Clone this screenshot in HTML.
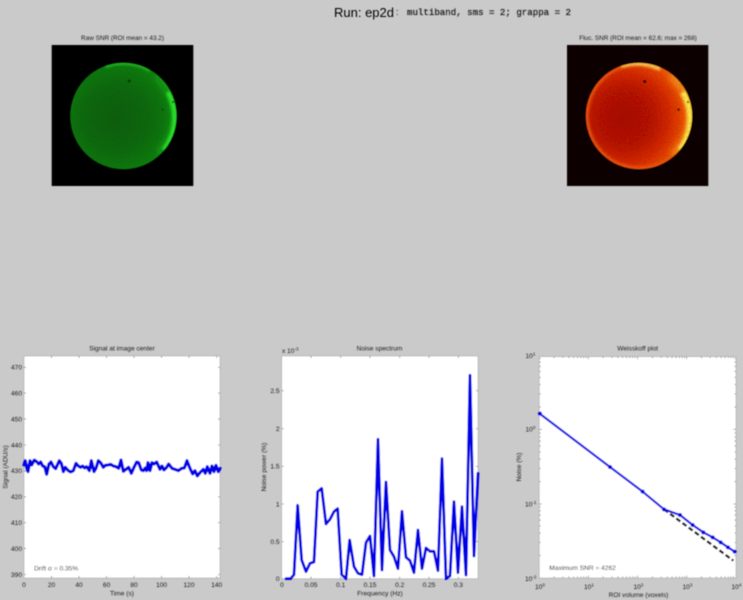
<!DOCTYPE html>
<html><head><meta charset="utf-8"><title>Run: ep2d</title>
<style>
html,body{margin:0;padding:0;background:#cacaca;width:743px;height:600px;overflow:hidden}
svg{display:block}
text{font-family:"Liberation Sans",sans-serif;font-size:6.6px;fill:#1c1c1c}
.m{text-anchor:middle}.e{text-anchor:end}
.mono{font-family:"Liberation Mono",monospace;font-size:9.1px;font-weight:normal;fill:#222;stroke:#222;stroke-width:.25}
.sup{font-size:4.6px}
.tick{stroke:#555;stroke-width:.6;fill:none}
.box{fill:#fff;stroke:#999;stroke-width:.5}
.tr{fill:none;stroke:#0000e6;stroke-linejoin:round;stroke-linecap:round}
</style></head><body>
<svg width="743" height="600" viewBox="0 0 743 600" xmlns="http://www.w3.org/2000/svg">
<defs>
<filter id="b" filterUnits="userSpaceOnUse" x="0" y="0" width="743" height="600"><feGaussianBlur stdDeviation="0.4"/></filter>
<filter id="b2" filterUnits="userSpaceOnUse" x="0" y="0" width="743" height="300"><feGaussianBlur stdDeviation="1.4"/></filter>
<filter id="b3" filterUnits="userSpaceOnUse" x="0" y="0" width="743" height="300"><feGaussianBlur stdDeviation="3.5"/></filter>
<filter id="n" x="0" y="0" width="100%" height="100%"><feTurbulence type="fractalNoise" baseFrequency="0.6" numOctaves="2" seed="4"/><feColorMatrix values="0 0 0 0 0  0 0 0 0 0  0 0 0 0 0  1.6 0 0 0 -0.65"/></filter>
<radialGradient id="g" gradientUnits="userSpaceOnUse" cx="116" cy="118" r="62">
<stop offset="0" stop-color="#0a5e0a"/><stop offset=".55" stop-color="#0b6a0b"/><stop offset=".85" stop-color="#0e7a0e"/><stop offset="1" stop-color="#128c12"/>
</radialGradient>
<radialGradient id="r" gradientUnits="userSpaceOnUse" cx="624" cy="118" r="70">
<stop offset="0" stop-color="#a90f02"/><stop offset=".4" stop-color="#b81303"/><stop offset=".65" stop-color="#d62a04"/><stop offset=".85" stop-color="#ec4c07"/><stop offset="1" stop-color="#f88a14"/>
</radialGradient>
<clipPath id="cg"><circle cx="123.4" cy="116" r="53"/></clipPath>
<clipPath id="cr"><circle cx="639" cy="116" r="53"/></clipPath>
<path id="mx" class="tick" d="M14.8 0v1.4M23.5 0v1.4M29.6 0v1.4M34.4 0v1.4M38.3 0v1.4M41.6 0v1.4M44.4 0v1.4M46.9 0v1.4"/>
<path id="my" class="tick" d="M0 -22.4h1.4M0 -35.5h1.4M0 -44.8h1.4M0 -52h1.4M0 -57.9h1.4M0 -62.9h1.4M0 -67.2h1.4M0 -71h1.4"/>
</defs>
<g filter="url(#b)">
<!-- Header -->
<text x="334" y="17" style="font-size:13px;fill:#000">Run: ep2d</text>
<text x="396" y="15" style="font-size:9px;fill:#222">:</text>
<text x="407" y="15" class="mono" textLength="164">multiband, sms = 2; grappa = 2</text>

<!-- Raw SNR -->
<text x="122.500" y="40" class="m" style="font-size:6.4px">Raw SNR (ROI mean = 43.2)</text>
<rect x="51.700" y="45" width="141.600" height="141" fill="#010201"/>
<circle cx="123.400" cy="116" r="53" fill="url(#g)"/>
<g clip-path="url(#cg)">
<path d="M158 76A53 53 0 0 1 160 154" fill="none" stroke="#129c12" stroke-width="9" filter="url(#b3)"/>
<path d="M168 92A53 53 0 0 1 164 150" fill="none" stroke="#2ce42c" stroke-width="5" filter="url(#b2)"/>
<path d="M105.300 66.200A53 53 0 0 1 150 70" fill="none" stroke="#2cc82c" stroke-width="3" filter="url(#b2)"/>
<rect x="70" y="63" width="107" height="106" filter="url(#n)" opacity=".1"/>
<circle cx="129.200" cy="81" r="1.500" fill="#063c06"/>
<circle cx="162.500" cy="109.500" r="1.200" fill="#074a07"/>
<circle cx="173" cy="102" r="1" fill="#074a07"/>
</g>

<!-- Fluc SNR -->
<text x="638" y="40" class="m" style="font-size:6.4px">Fluc. SNR (ROI mean = 62.6; max = 268)</text>
<rect x="567" y="45" width="141.300" height="141" fill="#0c0000"/>
<circle cx="639" cy="116" r="53" fill="url(#r)"/>
<g clip-path="url(#cr)">
<circle cx="639" cy="116" r="52.500" fill="none" stroke="#ee5808" stroke-width="4" filter="url(#b2)"/>
<path d="M672 74A53 53 0 0 1 675 156" fill="none" stroke="#f88c12" stroke-width="12" filter="url(#b3)"/>
<path d="M683 92A53 53 0 0 1 680 150" fill="none" stroke="#ffe84a" stroke-width="6" filter="url(#b2)"/>
<path d="M621 66A53 53 0 0 1 660 69" fill="none" stroke="#ffd858" stroke-width="3.500" filter="url(#b2)"/>
<rect x="586" y="63" width="107" height="106" filter="url(#n)" opacity=".2"/>
<circle cx="644.700" cy="81.500" r="1.600" fill="#3a0500"/>
<circle cx="678.500" cy="109.500" r="1.300" fill="#4a0800"/>
<circle cx="688" cy="102" r="1" fill="#7a1500"/>
</g>

<!-- Plot 1 -->
<rect class="box" x="24" y="356" width="196" height="222"/>
<path class="tick" d="M51.500 578v-2M79 578v-2M106.600 578v-2M134 578v-2M161.600 578v-2M189 578v-2M216.700 578v-2M51.500 356v2M79 356v2M106.600 356v2M134 356v2M161.600 356v2M189 356v2M216.700 356v2M24 367.300h2M24 393.200h2M24 419.100h2M24 445h2M24 470.900h2M24 496.800h2M24 522.700h2M24 548.600h2M24 574.500h2M220 367.300h-2M220 393.200h-2M220 419.100h-2M220 445h-2M220 470.900h-2M220 496.800h-2M220 522.700h-2M220 548.600h-2M220 574.500h-2"/>
<g transform="translate(0 340) scale(.3333)"><polyline class="tr" stroke-width="9.500" points="72,375 76,362 80,385 84,395 90,362 95,375 103,360 110,365 116,372 122,366 128,378 134,380 140,403 147,372 153,366 160,380 167,386 178,362 184,370 190,395 196,382 205,392 212,396 220,392 228,370 235,378 242,382 248,378 254,384 260,380 268,392 274,362 282,395 288,385 295,362 302,368 310,382 316,376 325,375 332,373 340,378 348,380 356,385 363,360 370,394 378,388 386,382 394,400 402,382 410,366 416,368 424,390 430,392 436,384 440,392 444,368 450,392 456,368 462,372 470,366 480,388 486,378 492,390 500,382 506,372 516,385 525,388 535,392 545,385 553,384 561,362 570,385 578,402 585,392 592,408 600,398 610,388 616,400 622,380 630,400 636,378 642,395 648,376 655,395 660,385"/></g>
<text x="122" y="350.500" class="m">Signal at image center</text>
<text x="22" y="369.500" class="e">470</text><text x="22" y="395.500" class="e">460</text><text x="22" y="421.400" class="e">450</text><text x="22" y="447.300" class="e">440</text><text x="22" y="473.200" class="e">430</text><text x="22" y="499.100" class="e">420</text><text x="22" y="525" class="e">410</text><text x="22" y="550.900" class="e">400</text><text x="22" y="576.800" class="e">390</text>
<text x="24" y="587" class="m">0</text><text x="51.500" y="587" class="m">20</text><text x="79" y="587" class="m">40</text><text x="106.600" y="587" class="m">60</text><text x="134" y="587" class="m">80</text><text x="161.600" y="587" class="m">100</text><text x="189" y="587" class="m">120</text><text x="216.700" y="587" class="m">140</text>
<text x="122" y="595.500" class="m">Time (s)</text>
<text transform="translate(7.500 467) rotate(-90)" class="m">Signal (ADU/s)</text>
<text x="34" y="570.700">Drift σ = 0.35%</text>

<!-- Plot 2 -->
<rect class="box" x="281.700" y="356" width="196.300" height="222.700"/>
<path class="tick" d="M311 578.700v-2M340.700 578.700v-2M370 578.700v-2M399.700 578.700v-2M429 578.700v-2M458.300 578.700v-2M311 356v2M340.700 356v2M370 356v2M399.700 356v2M429 356v2M458.300 356v2M281.700 541.700h2M281.700 504h2M281.700 466.300h2M281.700 428.700h2M281.700 390.700h2M478 541.700h-2M478 504h-2M478 466.300h-2M478 428.700h-2M478 390.700h-2"/>
<g transform="translate(250 340) scale(.3333)"><polyline class="tr" stroke-width="8.500" points="108,716 122,716 132,704 143,496 155,660 168,695 180,670 192,666 203,455 215,445 228,552 240,538 252,515 263,506 275,704 288,716 299,600 312,680 324,700 336,704 348,608 360,588 372,708 384,298 396,690 408,426 420,630 432,650 444,686 456,514 468,652 480,662 492,698 504,570 516,686 528,624 540,634 552,634 564,692 576,356 588,716 600,708 612,485 624,698 636,500 648,705 660,106 672,648 684,400"/></g>
<text x="379.500" y="350.500" class="m">Noise spectrum</text>
<text x="282" y="353">x 10<tspan class="sup" dy="-2.500">-3</tspan></text>
<text x="279.500" y="581" class="e">0</text><text x="279.500" y="544" class="e">0.5</text><text x="279.500" y="506.300" class="e">1</text><text x="279.500" y="468.600" class="e">1.5</text><text x="279.500" y="431" class="e">2</text><text x="279.500" y="393" class="e">2.5</text>
<text x="282" y="587" class="m">0</text><text x="311" y="587" class="m">0.05</text><text x="340.700" y="587" class="m">0.1</text><text x="370" y="587" class="m">0.15</text><text x="399.700" y="587" class="m">0.2</text><text x="429" y="587" class="m">0.25</text><text x="458.300" y="587" class="m">0.3</text>
<text x="380" y="595.500" class="m">Frequency (Hz)</text>
<text transform="translate(266 467) rotate(-90)" class="m">Noise power (%)</text>

<!-- Plot 3 -->
<rect class="box" x="539.300" y="356.700" width="196.700" height="221.300"/>
<path class="tick" d="M588.300 578v-2.500M637.700 578v-2.500M686.700 578v-2.500M588.300 356.700v2.500M637.700 356.700v2.500M686.700 356.700v2.500M539.300 429.300h2.500M539.300 504h2.500M736 429.300h-2.500M736 504h-2.500"/>
<use href="#mx" x="539.300" y="576.400"/><use href="#mx" x="588.300" y="576.400"/><use href="#mx" x="637.700" y="576.400"/><use href="#mx" x="686.700" y="576.400"/>
<use href="#mx" x="539.300" y="356.700"/><use href="#mx" x="588.300" y="356.700"/><use href="#mx" x="637.700" y="356.700"/><use href="#mx" x="686.700" y="356.700"/>
<use href="#my" x="539.300" y="578"/><use href="#my" x="539.300" y="504"/><use href="#my" x="539.300" y="429.300"/>
<use href="#my" x="734.600" y="578"/><use href="#my" x="734.600" y="504"/><use href="#my" x="734.600" y="429.300"/>
<g transform="translate(500 340) scale(.3333)">
<polyline fill="none" stroke="#000" stroke-width="7" stroke-dasharray="15 8" points="492,508 700,662"/>
<polyline class="tr" stroke-width="6.500" points="118,220 330,381 428,455 492,508 540,525 578,555 610,577 638,592 662,607 684,622 704,635"/>
<g fill="#0000e6"><circle cx="120" cy="221" r="6"/><circle cx="330" cy="381" r="6"/><circle cx="428" cy="455" r="6"/><circle cx="492" cy="508" r="6"/><circle cx="540" cy="525" r="6"/><circle cx="578" cy="555" r="6"/><circle cx="610" cy="577" r="6"/><circle cx="638" cy="592" r="6"/><circle cx="662" cy="607" r="6"/><circle cx="684" cy="622" r="6"/><circle cx="704" cy="635" r="6"/></g>
</g>
<text x="637.700" y="350.500" class="m">Weisskoff plot</text>
<text x="525.500" y="358">10<tspan class="sup" dy="-2.500">1</tspan></text>
<text x="525.500" y="431.500">10<tspan class="sup" dy="-2.500">0</tspan></text>
<text x="525" y="506.500">10<tspan class="sup" dy="-2.500">-1</tspan></text>
<text x="525" y="581">10<tspan class="sup" dy="-2.500">-2</tspan></text>
<text x="535" y="589">10<tspan class="sup" dy="-2.500">0</tspan></text>
<text x="584" y="589">10<tspan class="sup" dy="-2.500">1</tspan></text>
<text x="633.500" y="589">10<tspan class="sup" dy="-2.500">2</tspan></text>
<text x="682.500" y="589">10<tspan class="sup" dy="-2.500">3</tspan></text>
<text x="731.500" y="589">10<tspan class="sup" dy="-2.500">4</tspan></text>
<text x="638.500" y="597" class="m">ROI volume (voxels)</text>
<text transform="translate(521 467) rotate(-90)" class="m">Noise (%)</text>
<text x="549.300" y="570">Maximum SNR = 4262</text>
</g>
</svg>
</body></html>
